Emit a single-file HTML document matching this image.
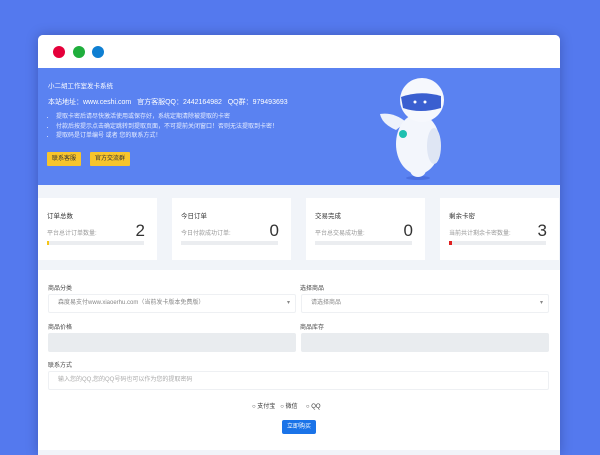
<!DOCTYPE html>
<html><head><meta charset="utf-8"><style>
*{margin:0;padding:0;box-sizing:border-box}
body{width:600px;height:450px;overflow:hidden;background:#5479ee;font-family:"Liberation Sans","Noto Sans CJK SC",sans-serif;position:relative}
.win{position:absolute;left:38px;top:35px;width:522px;height:420px;background:#f1f4f9;border-radius:5px 5px 0 0;overflow:hidden;box-shadow:0 0 12px rgba(0,0,40,.25)}
.top{height:33px;background:#fff;position:relative}
.dot{position:absolute;top:11px;width:12px;height:12px;border-radius:50%}
.ban{position:absolute;top:33px;left:0;width:522px;height:117px;background:#5a82f1;color:#fff;font-size:6.5px}
.ban .t{position:absolute;left:10px;top:12px}
.ban .s{position:absolute;left:10px;top:29px;font-size:7px}
.ban ul{position:absolute;left:18px;top:45px;line-height:9.5px;color:#e7eeff;font-size:6px}
.btn{position:absolute;height:14px;background:#f7c52c;color:#333;font-size:6px;line-height:14px;padding:0 5px;border-radius:1px}
.card{position:absolute;top:163px;height:62px;background:#fff;width:119px;font-size:6px;color:#333}
.card .h{position:absolute;left:9px;top:12px;font-size:6.5px}
.card .d{position:absolute;left:9px;top:30px;color:#999}
.card .n{position:absolute;right:12px;top:23px;font-size:17px;color:#333}
.card .b{position:absolute;left:9px;top:43px;width:97px;height:4px;background:#ebedf0}
.form{position:absolute;top:235px;left:0;width:522px;height:180px;background:#fff;font-size:6px;color:#444}
.lb{position:absolute}
.inp{position:absolute;height:19px;border:1px solid #eef0f3;border-radius:2px;color:#888;line-height:17px;padding-left:9px;font-size:6px}
.gr{background:#e9ecef;border:none}
</style></head><body>
<div class="win">
 <div class="top">
  <div class="dot" style="left:15px;background:#e5003a"></div>
  <div class="dot" style="left:35px;background:#1fae3c"></div>
  <div class="dot" style="left:54px;background:#0f7fd2"></div>
 </div>
 <div class="ban">
  <div class="t">小二胡工作室发卡系统</div>
  <div class="s">本站地址：www.ceshi.com &nbsp; 官方客服QQ：2442164982 &nbsp; QQ群：979493693</div>
  <ul><li>提取卡密后请尽快激活使用或保存好，系统定期清除被提取的卡密</li><li>付款后按提示点击确定跳转到提取页面，不可提前关闭窗口！否则无法提取到卡密！</li><li>提取码是订单编号 或者 您的联系方式！</li></ul>
  <div class="btn" style="left:9px;top:84px">联系客服</div>
  <div class="btn" style="left:52px;top:84px">官方交流群</div>
  <svg style="position:absolute;left:340px;top:2px" width="80" height="113" viewBox="0 0 80 113">
   <ellipse cx="40" cy="108" rx="12" ry="2" fill="#4a6fe0"/>
   <path d="M18 60 Q4 54 2 44 Q16 42 28 52Z" fill="#eef2fb"/>
   <ellipse cx="40" cy="74" rx="22" ry="30" fill="#f3f6fc"/>
   <ellipse cx="56" cy="76" rx="7" ry="18" fill="#dfe6f4"/>
   <ellipse cx="40" cy="100" rx="8" ry="7" fill="#f3f6fc"/>
   <circle cx="25" cy="64" r="4" fill="#1ec0b0"/>
   <circle cx="44" cy="30" r="22" fill="#f6f8fd"/>
   <path d="M23 27 Q42 20 63 26 L63 38 Q42 44 25 38Z" fill="#3a5fd0"/>
   <circle cx="37" cy="32" r="1.5" fill="#fff"/><circle cx="47" cy="32" r="1.5" fill="#fff"/>
  </svg>
 </div>
 <div class="card" style="left:0"><div class="h">订单总数</div><div class="d">平台总计订单数量:</div><div class="n">2</div><div class="b"><div style="width:2px;height:4px;background:#f5c518"></div></div></div>
 <div class="card" style="left:134px"><div class="h">今日订单</div><div class="d">今日付款成功订单:</div><div class="n">0</div><div class="b"></div></div>
 <div class="card" style="left:268px"><div class="h">交易完成</div><div class="d">平台总交易成功量:</div><div class="n">0</div><div class="b"></div></div>
 <div class="card" style="left:402px"><div class="h">剩余卡密</div><div class="d">当前共计剩余卡密数量:</div><div class="n">3</div><div class="b"><div style="width:3px;height:4px;background:#e02020"></div></div></div>
 <div class="form">
  <div class="lb" style="left:10px;top:13px">商品分类</div>
  <div class="lb" style="left:262px;top:13px">选择商品</div>
  <div class="inp" style="left:10px;top:24px;width:248px">森度易支付www.xiaoerhu.com（当前发卡版本免费版）<span style="position:absolute;right:5px">▾</span></div>
  <div class="inp" style="left:263px;top:24px;width:248px">请选择商品<span style="position:absolute;right:5px">▾</span></div>
  <div class="lb" style="left:10px;top:52px">商品价格</div>
  <div class="lb" style="left:262px;top:52px">商品库存</div>
  <div class="inp gr" style="left:10px;top:63px;width:248px"></div>
  <div class="inp gr" style="left:263px;top:63px;width:248px"></div>
  <div class="lb" style="left:10px;top:90px">联系方式</div>
  <div class="inp" style="left:10px;top:101px;width:501px;color:#aaa">输入您的QQ,您的QQ号码也可以作为您的提取密码</div>
  <div class="lb" style="left:214px;top:131px;color:#333">○ 支付宝 &nbsp; ○ 微信 &nbsp; &nbsp; ○ QQ</div>
  <div class="lb" style="left:244px;top:150px;width:34px;height:14px;background:#1a73e8;color:#fff;line-height:14px;text-align:center;border-radius:2px">立即购买</div>
 </div>
</div>
</body></html>
